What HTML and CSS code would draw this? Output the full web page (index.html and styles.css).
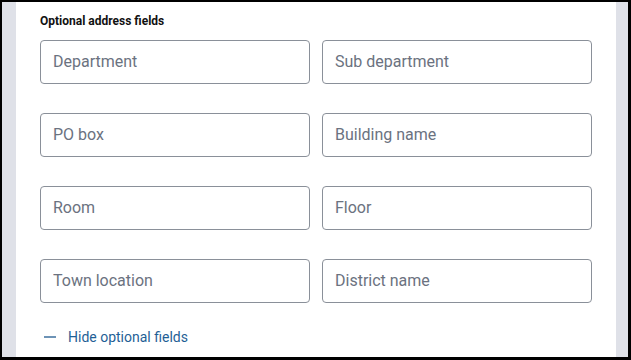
FILE: index.html
```html
<!DOCTYPE html>
<html lang="en">
<head>
    <meta charset="UTF-8">
    <title>Optional address fields</title>
    <link rel="stylesheet" href="styles.css">
</head>
<body>
    <div class="frame">
        <div class="card">
            <h3 class="titulo">Optional address fields</h3>
            <div class="campos">
                <input type="text" placeholder="Department">
                <input type="text" placeholder="Sub department">
                <input type="text" placeholder="PO box">
                <input type="text" placeholder="Building name">
                <input type="text" placeholder="Room">
                <input type="text" placeholder="Floor">
                <input type="text" placeholder="Town location">
                <input type="text" placeholder="District name">
            </div>
            <a class="ocultar" href="#">
                <span class="guion"></span>
                Hide optional fields
            </a>
        </div>
    </div>
</body>
</html>
```

FILE: styles.css
```css
html, body {
    margin: 0;
    padding: 0;
}
body {
    font-family: Roboto, Arial, sans-serif;
}
.frame {
    box-sizing: border-box;
    width: 631px;
    height: 360px;
    border: 2px solid #000;
    border-right-width: 3px;
    border-bottom-width: 3px;
    background-color: #dfe1e8;
    overflow: hidden;
}
.card {
    margin: 0 12px 0 14px;
    height: 100%;
    background-color: #fff;
    padding: 0 24px;
    box-sizing: border-box;
}
.titulo {
    margin: 0;
    padding-top: 11px;
    font-size: 12px;
    font-weight: bold;
    line-height: 16px;
    color: #111;
}
.campos {
    display: grid;
    grid-template-columns: 270px 270px;
    column-gap: 12px;
    row-gap: 29px;
    margin-top: 11px;
}
.campos input {
    box-sizing: border-box;
    height: 44px;
    width: 100%;
    border: 1px solid #8a9099;
    border-radius: 4px;
    padding: 0 12px 2px;
    font-family: Roboto, Arial, sans-serif;
    font-size: 16px;
    color: #333;
    outline: none;
}
.campos input::placeholder {
    color: #6b7280;
}
.ocultar {
    display: flex;
    align-items: center;
    gap: 12px;
    margin-top: 26px;
    padding-left: 4px;
    font-size: 14px;
    color: #1f5f96;
    text-decoration: none;
}
.guion {
    display: inline-block;
    width: 12px;
    height: 2px;
    background-color: #6d93b6;
}
```
